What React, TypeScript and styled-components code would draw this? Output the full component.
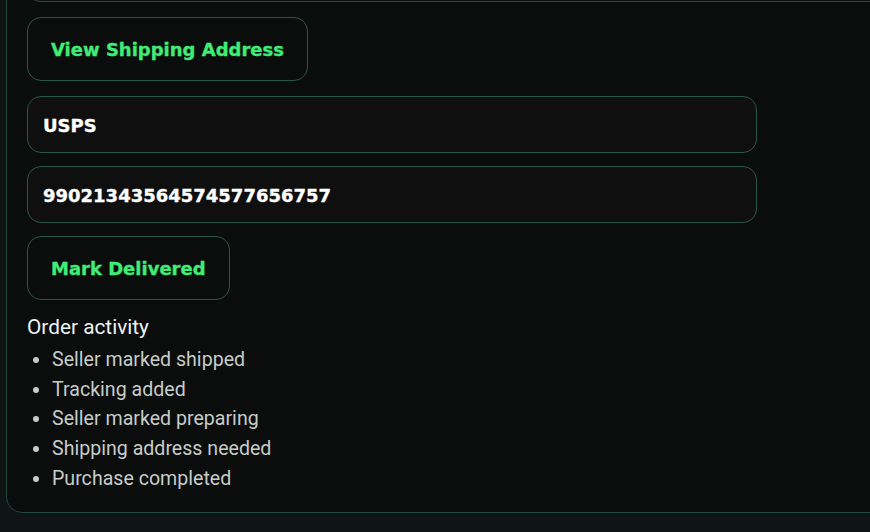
import React from "react";
import styled, { createGlobalStyle } from "styled-components";

const GlobalStyle = createGlobalStyle`
  html, body {
    margin: 0;
    padding: 0;
    background: #0e1514;
    overflow: hidden;
  }
  * { box-sizing: border-box; }
`;

const Page = styled.div`
  width: 870px;
  height: 532px;
  overflow: hidden;
  padding-left: 6px;
`;

const Panel = styled.section`
  width: 960px;
  margin-top: -60px;
  background: #0b0d0c;
  border: 1px solid #1f4a3a;
  border-radius: 16px;
  padding: 0 20px 18px 20px;
  display: flex;
  flex-direction: column;
  gap: 13px;
  align-items: flex-start;
`;

const PrevCard = styled.div`
  align-self: stretch;
  height: 61px;
  margin-bottom: 2px;
  border: 1px solid #24503f;
  border-top: none;
  border-radius: 0 0 14px 14px;
  background: #0c0e0d;
`;

const ActionButton = styled.button<{ $extraSpace?: boolean }>`
  font-family: "DejaVu Sans", sans-serif;
  font-weight: 700;
  font-size: 18px;
  line-height: 22px;
  color: #40ec76;
  -webkit-text-stroke: 0.35px currentColor;
  background: #0b0d0c;
  border: 1px solid #275846;
  border-radius: 14px;
  padding: 21px 23px 19px;
  margin-bottom: ${(p) => (p.$extraSpace ? "2px" : "0")};
  cursor: pointer;
`;

const Field = styled.input`
  width: 730px;
  height: 57px;
  font-family: "DejaVu Sans", sans-serif;
  font-weight: 700;
  font-size: 18px;
  color: #ffffff;
  -webkit-text-stroke: 0.35px currentColor;
  background: #0f0f0f;
  border: 1px solid #275846;
  border-radius: 14px;
  padding: 1px 15px 0;
  outline: none;
`;

const Activity = styled.div`
  font-family: Roboto, "Noto Sans", sans-serif;
  padding-top: 1px;
`;

const ActivityTitle = styled.h3`
  margin: 0;
  font-size: 20.8px;
  font-weight: 400;
  line-height: 27px;
  color: #eef3f1;
`;

const ActivityList = styled.ul`
  margin: 4px 0 0 0;
  padding-left: 25px;
`;

const ActivityItem = styled.li`
  font-size: 19.6px;
  line-height: 29.7px;
  color: #c6ccc9;
  &::marker {
    color: #c6ccc9;
  }
`;

const events = [
  "Seller marked shipped",
  "Tracking added",
  "Seller marked preparing",
  "Shipping address needed",
  "Purchase completed",
];

export default function App() {
  return (
    <>
      <GlobalStyle />
      <Page>
        <Panel>
          <PrevCard />
          <ActionButton $extraSpace>View Shipping Address</ActionButton>
          <Field defaultValue="USPS" />
          <Field defaultValue="99021343564574577656757" />
          <ActionButton>Mark Delivered</ActionButton>
          <Activity>
            <ActivityTitle>Order activity</ActivityTitle>
            <ActivityList>
              {events.map((e) => (
                <ActivityItem key={e}>{e}</ActivityItem>
              ))}
            </ActivityList>
          </Activity>
        </Panel>
      </Page>
    </>
  );
}
